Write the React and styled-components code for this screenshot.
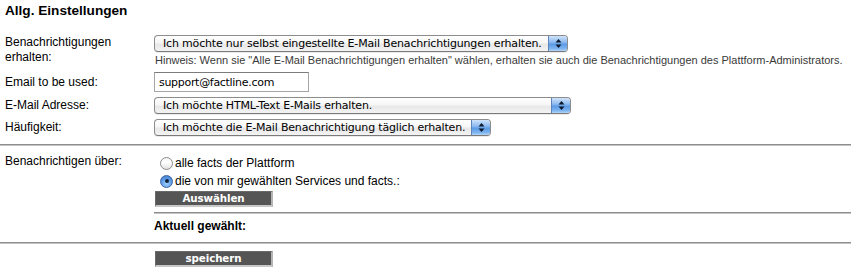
import React from "react";
import styled, { createGlobalStyle } from "styled-components";

const GlobalStyle = createGlobalStyle`
  html, body { margin: 0; padding: 0; background: #fff; }
  body {
    font-family: "Liberation Sans", Arial, Helvetica, sans-serif;
    font-size: 12px;
    color: #000;
  }
`;

const Page = styled.div`
  width: 851px;
  padding-top: 3px;
`;

const Title = styled.h2`
  margin: 0 0 16px;
  padding: 0 5px;
  font-size: 13.6px;
  line-height: 16px;
  font-weight: bold;
`;

const Rows = styled.div`
  display: flex;
  flex-direction: column;
  gap: 5px;
`;

const Row = styled.div`
  display: grid;
  grid-template-columns: 149px 1fr;
  align-items: ${(p) => (p.$top ? "start" : "center")};
  padding-left: 5px;
  padding-top: ${(p) => p.$pt || 0}px;
`;

const Label = styled.div`
  line-height: 15px;
  padding-right: 20px;
`;

const Field = styled.div`
  display: flex;
  flex-direction: column;
  align-items: flex-start;
`;

const SelectBox = styled.div`
  box-sizing: border-box;
  width: ${(p) => p.$w}px;
  height: 17px;
  display: flex;
  align-items: stretch;
  border: 1px solid #8c8c8c;
  border-bottom-color: #7a7a7a;
  border-radius: 4px;
  overflow: hidden;
  background: linear-gradient(
    to bottom,
    #ffffff 0%,
    #f6f6f6 45%,
    #e8e8e8 55%,
    #f3f3f3 100%
  );
  box-shadow: 0 1px 0 rgba(0, 0, 0, 0.08);
`;

const SelectText = styled.span`
  flex: 1;
  padding-left: 8px;
  font-family: "DejaVu Sans", "Liberation Sans", sans-serif;
  font-size: 11px;
  letter-spacing: -0.18px;
  line-height: 15px;
  color: #000;
  white-space: nowrap;
`;

const ArrowPart = styled.span`
  width: 18px;
  display: flex;
  align-items: center;
  justify-content: center;
  border-left: 1px solid #5d83b9;
  background: linear-gradient(
    to bottom,
    #cfe3fa 0%,
    #8fbcf0 40%,
    #5d9be6 55%,
    #7fb5f0 85%,
    #b6d6f8 100%
  );
`;

const Hint = styled.div`
  margin-top: 1px;
  padding-left: 1px;
  font-size: 11px;
  line-height: 14px;
  color: #3a3a3a;
  white-space: nowrap;
`;

const TextInput = styled.input`
  box-sizing: border-box;
  width: 155px;
  height: 20px;
  margin: 0;
  padding: 0 4px;
  border: 1px solid #a5a5a5;
  border-top-color: #7c7c7c;
  background: #fff;
  font-family: "DejaVu Sans", "Liberation Sans", sans-serif;
  font-size: 11px;
  letter-spacing: -0.3px;
  color: #000;
  outline: none;
`;

const Rule = styled.hr`
  margin: ${(p) => p.$m || "0"};
  height: 0;
  border: 0;
  border-top: 1px solid #8e8e8e;
  border-bottom: 1px solid #c4c4c4;
  align-self: stretch;
`;

const RadioList = styled.div`
  display: flex;
  flex-direction: column;
  padding-left: 6px;
`;

const RadioRow = styled.label`
  display: flex;
  align-items: center;
  gap: 2px;
  height: 18px;
  line-height: 18px;
`;

const RadioDot = styled.span`
  box-sizing: border-box;
  width: 13px;
  height: 13px;
  border-radius: 50%;
  display: flex;
  align-items: center;
  justify-content: center;
  border: 1px solid ${(p) => (p.$on ? "#3e64a2" : "#8a8a8a")};
  background: ${(p) =>
    p.$on
      ? "radial-gradient(circle at 50% 70%, #9fd0fb 0%, #5a9ae6 55%, #3a73c9 100%)"
      : "linear-gradient(to bottom, #f4f4f4 0%, #ffffff 40%, #e2e2e2 100%)"};
  &::after {
    content: "";
    display: ${(p) => (p.$on ? "block" : "none")};
    width: 4px;
    height: 4px;
    border-radius: 50%;
    background: #12223a;
  }
`;

const DarkButton = styled.button`
  box-sizing: border-box;
  width: 118px;
  height: 16px;
  margin: ${(p) => p.$m || "0"};
  padding: 0 0 1px;
  border: 0;
  border-top: 1px solid #6a6a6a;
  border-left: 1px solid #6a6a6a;
  border-right: 2px solid #b4b4b4;
  border-bottom: 2px solid #c8c8c8;
  background: #555555;
  color: #fff;
  font-family: "DejaVu Sans", "Liberation Sans", sans-serif;
  font-size: 10.3px;
  font-weight: bold;
  letter-spacing: -0.1px;
  line-height: 12px;
  text-align: center;
  cursor: pointer;
`;

const Strong = styled.div`
  margin-top: 5px;
  font-weight: bold;
  line-height: 15px;
`;

const Arrows = () => (
  <svg width="7" height="11" viewBox="0 0 7 11">
    <path d="M3.5 1 L6.5 4.5 L0.5 4.5 Z" fill="#0d1a2e" />
    <path d="M3.5 10 L6.5 6.5 L0.5 6.5 Z" fill="#0d1a2e" />
  </svg>
);

const Select = ({ w, children }) => (
  <SelectBox $w={w}>
    <SelectText>{children}</SelectText>
    <ArrowPart>
      <Arrows />
    </ArrowPart>
  </SelectBox>
);

export default function App() {
  return (
    <Page>
      <GlobalStyle />
      <Title>Allg. Einstellungen</Title>
      <Rows>
        <Row $top>
          <Label>Benachrichtigungen erhalten:</Label>
          <Field>
            <Select w={414}>
              Ich möchte nur selbst eingestellte E-Mail Benachrichtigungen erhalten.
            </Select>
            <Hint>
              Hinweis: Wenn sie "Alle E-Mail Benachrichtigungen erhalten" wählen,
              erhalten sie auch die Benachrichtigungen des Plattform-Administrators.
            </Hint>
          </Field>
        </Row>
        <Row>
          <Label>Email to be used:</Label>
          <Field>
            <TextInput defaultValue="support@factline.com" />
          </Field>
        </Row>
        <Row>
          <Label>E-Mail Adresse:</Label>
          <Field>
            <Select w={417}>Ich möchte HTML-Text E-Mails erhalten.</Select>
          </Field>
        </Row>
        <Row>
          <Label>Häufigkeit:</Label>
          <Field>
            <Select w={337}>
              Ich möchte die E-Mail Benachrichtigung täglich erhalten.
            </Select>
          </Field>
        </Row>
      </Rows>
      <Rule $m="8px 0 0" />
      <Row $top $pt={8}>
        <Label>Benachrichtigen über:</Label>
        <Field>
          <RadioList>
            <RadioRow>
              <RadioDot />
              alle facts der Plattform
            </RadioRow>
            <RadioRow>
              <RadioDot $on />
              die von mir gewählten Services und facts.:
            </RadioRow>
          </RadioList>
          <DarkButton $m="1px 0 0 1px">Auswählen</DarkButton>
          <Rule $m="5px 0 0" />
          <Strong>Aktuell gewählt:</Strong>
        </Field>
      </Row>
      <Rule $m="8px 0 0" />
      <Row $pt={7}>
        <Label />
        <Field>
          <DarkButton $m="0 0 0 1px">speichern</DarkButton>
        </Field>
      </Row>
    </Page>
  );
}
